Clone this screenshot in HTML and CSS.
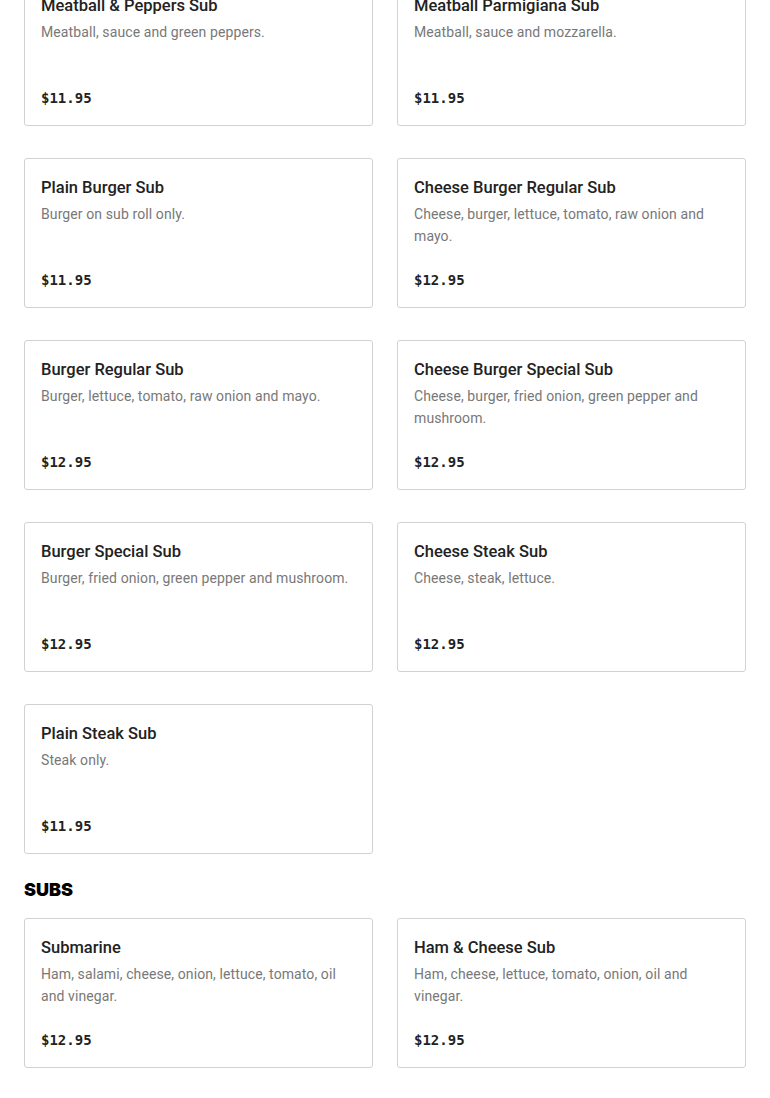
FILE: index.html
```html
<!DOCTYPE html>
<html lang="en">
<head>
    <meta charset="UTF-8">
    <meta name="viewport" content="width=device-width, initial-scale=1.0">
    <title>Menu</title>
    <link rel="stylesheet" href="styles.css">
</head>
<body>
    <div class="menu">
        <div class="item-grid first">
            <div class="item-card">
                <h3 class="item-name">Meatball &amp; Peppers Sub</h3>
                <p class="item-desc">Meatball, sauce and green peppers.</p>
                <span class="item-price">$11.95</span>
            </div>
            <div class="item-card">
                <h3 class="item-name">Meatball Parmigiana Sub</h3>
                <p class="item-desc">Meatball, sauce and mozzarella.</p>
                <span class="item-price">$11.95</span>
            </div>
            <div class="item-card">
                <h3 class="item-name">Plain Burger Sub</h3>
                <p class="item-desc">Burger on sub roll only.</p>
                <span class="item-price">$11.95</span>
            </div>
            <div class="item-card">
                <h3 class="item-name">Cheese Burger Regular Sub</h3>
                <p class="item-desc">Cheese, burger, lettuce, tomato, raw onion and mayo.</p>
                <span class="item-price">$12.95</span>
            </div>
            <div class="item-card">
                <h3 class="item-name">Burger Regular Sub</h3>
                <p class="item-desc">Burger, lettuce, tomato, raw onion and mayo.</p>
                <span class="item-price">$12.95</span>
            </div>
            <div class="item-card">
                <h3 class="item-name">Cheese Burger Special Sub</h3>
                <p class="item-desc">Cheese, burger, fried onion, green pepper and mushroom.</p>
                <span class="item-price">$12.95</span>
            </div>
            <div class="item-card">
                <h3 class="item-name">Burger Special Sub</h3>
                <p class="item-desc">Burger, fried onion, green pepper and mushroom.</p>
                <span class="item-price">$12.95</span>
            </div>
            <div class="item-card">
                <h3 class="item-name">Cheese Steak Sub</h3>
                <p class="item-desc">Cheese, steak, lettuce.</p>
                <span class="item-price">$12.95</span>
            </div>
            <div class="item-card">
                <h3 class="item-name">Plain Steak Sub</h3>
                <p class="item-desc">Steak only.</p>
                <span class="item-price">$11.95</span>
            </div>
        </div>

        <h2 class="section-title">Subs</h2>

        <div class="item-grid">
            <div class="item-card">
                <h3 class="item-name">Submarine</h3>
                <p class="item-desc">Ham, salami, cheese, onion, lettuce, tomato, oil and vinegar.</p>
                <span class="item-price">$12.95</span>
            </div>
            <div class="item-card">
                <h3 class="item-name">Ham &amp; Cheese Sub</h3>
                <p class="item-desc">Ham, cheese, lettuce, tomato, onion, oil and vinegar.</p>
                <span class="item-price">$12.95</span>
            </div>
            <div class="item-card">
                <h3 class="item-name">Italian Sub</h3>
                <p class="item-desc">Ham, salami, provolone, lettuce, tomato, onion, oil and vinegar.</p>
                <span class="item-price">$12.95</span>
            </div>
            <div class="item-card">
                <h3 class="item-name">Turkey Sub</h3>
                <p class="item-desc">Turkey, cheese, lettuce, tomato and mayo.</p>
                <span class="item-price">$12.95</span>
            </div>
        </div>
    </div>
</body>
</html>
```

FILE: styles.css
```css
* {
    margin: 0;
    padding: 0;
    box-sizing: border-box;
}

body {
    font-family: 'Roboto', sans-serif;
    background: #fff;
    color: #222;
}

.menu {
    padding: 0 24px;
}

.item-grid {
    display: grid;
    grid-template-columns: 1fr 1fr;
    gap: 32px 24px;
}

.item-grid.first {
    margin-top: -24px;
}

.item-card {
    display: flex;
    flex-direction: column;
    height: 150px;
    padding: 16px;
    border: 1px solid #d2d2d2;
    border-radius: 3px;
    background: #fff;
}

.item-name {
    font-size: 16.5px;
    font-weight: 500;
    line-height: 26px;
    color: #222;
    margin-bottom: 2px;
}

.item-desc {
    font-size: 14px;
    line-height: 22px;
    letter-spacing: 0.1px;
    color: #787878;
}

.item-price {
    margin-top: auto;
    font-family: 'DejaVu Sans Mono', monospace;
    font-size: 14px;
    font-weight: bold;
    line-height: 22px;
    color: #222;
}

.section-title {
    font-family: 'Inter', sans-serif;
    font-size: 18px;
    font-weight: 900;
    text-transform: uppercase;
    color: #000;
    line-height: 24px;
    margin: 24px 0 16px;
}
```
